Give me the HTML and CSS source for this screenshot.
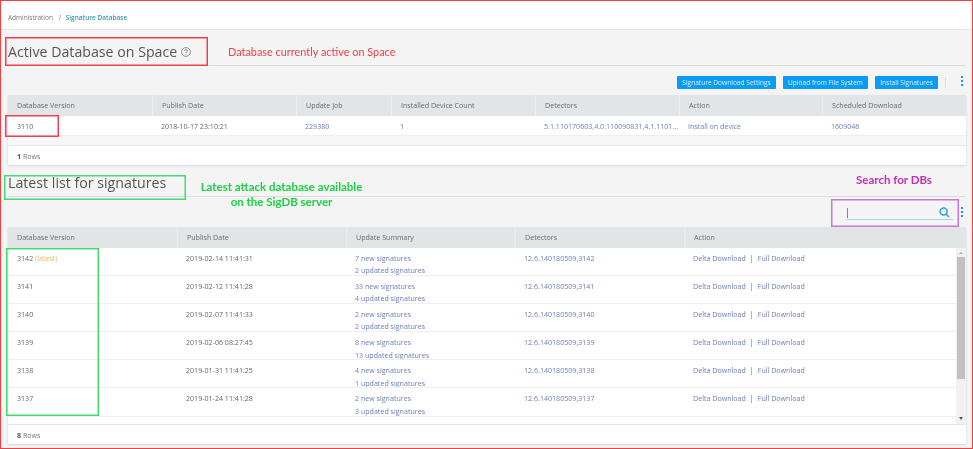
FILE: index.html
```html
<!DOCTYPE html>
<html lang="en">
<head>
  <meta charset="UTF-8">
  <title>Signature Database</title>
  <link rel="stylesheet" href="styles.css">
</head>
<body>
  <div class="frame">
    <div class="breadcrumb">
      <span>Administration</span>
      <span class="crumb-sep">/</span>
      <b>Signature Database</b>
    </div>

    <div class="content">
      <div class="section-title active-title">
        <h1>Active Database on Space</h1>
        <svg class="help-icon" width="10" height="10" viewBox="0 0 10 10" fill="none" stroke="#777" stroke-width="0.8">
          <circle cx="5" cy="5" r="4.4"/>
          <path d="M3.6 4C3.6 3.1 4.2 2.6 5 2.6C5.8 2.6 6.4 3.1 6.4 3.8C6.4 4.8 5 4.8 5 5.9"/>
          <path d="M5 6.8V7.6"/>
        </svg>
      </div>

      <div class="toolbar">
        <button class="btn btn-settings">Signature Download Settings</button>
        <button class="btn btn-upload">Upload from File System</button>
        <button class="btn btn-install">Install Signatures</button>
        <span class="toolbar-sep"></span>
        <span class="kebab"><i></i><i></i><i></i></span>
      </div>

      <div class="grid-panel">
        <div class="row head cols-active">
          <div>Database Version</div>
          <div>Publish Date</div>
          <div>Update Job</div>
          <div>Installed Device Count</div>
          <div>Detectors</div>
          <div>Action</div>
          <div>Scheduled Download</div>
        </div>
        <div class="row body-row single cols-active">
          <div>3110</div>
          <div>2018-10-17 23:10:21</div>
          <div><a>229380</a></div>
          <div>1</div>
          <div><a>5.1.110170603,4.0.110090831,4.1.1101...</a></div>
          <div><a>Install on device</a></div>
          <div><a>1609046</a></div>
        </div>
        <div class="spacer"></div>
        <div class="panel-footer"><b>1</b> Rows</div>
      </div>

      <div class="section-title latest-title">
        <h1>Latest list for signatures</h1>
      </div>

      <div class="toolbar search-bar">
        <div class="search-field">
          <span class="caret"></span>
          <svg width="11" height="11" viewBox="0 0 11 11" fill="none" stroke="#2ea3dc" stroke-width="1.5">
            <circle cx="4.6" cy="4.6" r="3.5"/>
            <path d="M7.2 7.2L10 10"/>
          </svg>
        </div>
        <span class="kebab"><i></i><i></i><i></i></span>
      </div>

      <div class="grid-panel">
        <div class="row head cols-latest">
          <div>Database Version</div>
          <div>Publish Date</div>
          <div>Update Summary</div>
          <div>Detectors</div>
          <div>Action</div>
        </div>
        <div class="scroll-area">
          <div class="rows">
            <div class="row body-row double cols-latest">
              <div>3142 <span class="latest">(latest)</span></div>
              <div>2019-02-14 11:41:31</div>
              <div><a>7 new signatures</a><a>2 updated signatures</a></div>
              <div><a>12.6.140180509,3142</a></div>
              <div><a>Delta Download</a><span class="pipe">|</span><a>Full Download</a></div>
            </div>
            <div class="row body-row double cols-latest">
              <div>3141</div>
              <div>2019-02-12 11:41:28</div>
              <div><a>33 new signatures</a><a>4 updated signatures</a></div>
              <div><a>12.6.140180509,3141</a></div>
              <div><a>Delta Download</a><span class="pipe">|</span><a>Full Download</a></div>
            </div>
            <div class="row body-row double cols-latest">
              <div>3140</div>
              <div>2019-02-07 11:41:33</div>
              <div><a>2 new signatures</a><a>2 updated signatures</a></div>
              <div><a>12.6.140180509,3140</a></div>
              <div><a>Delta Download</a><span class="pipe">|</span><a>Full Download</a></div>
            </div>
            <div class="row body-row double cols-latest">
              <div>3139</div>
              <div>2019-02-06 08:27:45</div>
              <div><a>8 new signatures</a><a>13 updated signatures</a></div>
              <div><a>12.6.140180509,3139</a></div>
              <div><a>Delta Download</a><span class="pipe">|</span><a>Full Download</a></div>
            </div>
            <div class="row body-row double cols-latest">
              <div>3138</div>
              <div>2019-01-31 11:41:25</div>
              <div><a>4 new signatures</a><a>1 updated signatures</a></div>
              <div><a>12.6.140180509,3138</a></div>
              <div><a>Delta Download</a><span class="pipe">|</span><a>Full Download</a></div>
            </div>
            <div class="row body-row double cols-latest">
              <div>3137</div>
              <div>2019-01-24 11:41:28</div>
              <div><a>2 new signatures</a><a>3 updated signatures</a></div>
              <div><a>12.6.140180509,3137</a></div>
              <div><a>Delta Download</a><span class="pipe">|</span><a>Full Download</a></div>
            </div>
          </div>
          <div class="scrollbar">
            <span class="arrow-up"></span>
            <span class="thumb"></span>
            <span class="arrow-down"></span>
          </div>
        </div>
        <div class="panel-footer"><b>8</b> Rows</div>
      </div>
    </div>

    <!-- annotations drawn on top of the screenshot -->
    <div class="mark box-title"></div>
    <div class="mark box-version"></div>
    <div class="mark box-latest"></div>
    <div class="mark box-column"></div>
    <div class="mark box-search"></div>
    <div class="note note-red">Database currently active on Space</div>
    <div class="note note-green">Latest attack database available<br>on the SigDB server</div>
    <div class="note note-purple">Search for DBs</div>
  </div>
</body>
</html>
```

FILE: styles.css
```css
html, body {
  margin: 0;
  padding: 0;
}
body {
  background: #fff;
  font-family: 'Open Sans', 'Liberation Sans', sans-serif;
  font-size: 7.1px;
  color: #666;
}
.frame {
  position: relative;
  box-sizing: border-box;
  width: 973px;
  height: 449px;
  border: 1px solid #f04040;
  overflow: hidden;
  background: #f4f4f4;
  filter: blur(0.3px);
}
.breadcrumb {
  box-sizing: border-box;
  height: 29px;
  padding: 12px 0 0 7px;
  line-height: 9px;
  font-size: 6.5px;
  background: #fff;
  border-bottom: 1px solid #e6e6e6;
  color: #777;
}
.breadcrumb b {
  color: #3f9aa8;
  font-weight: 600;
}
.crumb-sep {
  margin: 0 3px 0 4px;
}
.content {
  padding: 0 6px 0 7px;
}
.section-title {
  display: flex;
  align-items: center;
  box-sizing: border-box;
  border-bottom: 1px solid #dcdcdc;
}
.section-title h1 {
  margin: 0;
  font-size: 14.2px;
  font-weight: 400;
  color: #555;
}
.active-title {
  height: 36px;
  padding-top: 7px;
}
.help-icon {
  margin: 1px 0 0 4px;
}
.latest-title {
  height: 32px;
  padding-top: 3px;
}
.toolbar {
  display: flex;
  justify-content: flex-end;
  align-items: center;
  height: 29px;
  padding-top: 4px;
  box-sizing: border-box;
}
.btn {
  height: 13px;
  padding: 0;
  margin-left: 7px;
  border: 0;
  border-radius: 1px;
  background: #0a9bf5;
  color: #d8f0ff;
  font-family: inherit;
  font-size: 6.6px;
  line-height: 13px;
}
.btn-settings { width: 99px; }
.btn-upload { width: 85px; }
.btn-install { width: 63px; }
.toolbar-sep {
  width: 1px;
  height: 11px;
  margin-left: 7px;
  background: #ddd;
}
.kebab {
  display: flex;
  flex-direction: column;
  gap: 2px;
  width: 2px;
  margin: 0 3px 3px 15px;
}
.kebab i {
  display: block;
  width: 2px;
  height: 2px;
  background: #0a9bf5;
}
.search-bar {
  height: 30px;
  padding-top: 1px;
}
.search-field {
  display: flex;
  justify-content: space-between;
  align-items: center;
  box-sizing: border-box;
  width: 106px;
  height: 14px;
  margin-top: 1px;
  padding: 0 3px 0 0;
  border-bottom: 1px solid #a5d8ea;
}
.caret {
  width: 1px;
  height: 10px;
  background: #888;
}
.search-bar .kebab {
  margin: 0 3px 2px 8px;
}
.grid-panel {
  background: #fff;
  box-shadow: 0 1px 2px rgba(0,0,0,0.12);
}
.row {
  display: grid;
}
.row > div {
  padding-left: 9px;
  white-space: nowrap;
  overflow: hidden;
}
.cols-active {
  grid-template-columns: 144px 144px 95px 144px 144px 143px 1fr;
}
.cols-latest {
  grid-template-columns: 169px 169px 169px 169px 1fr;
}
.head {
  height: 21px;
  background: #e2e5e6;
  line-height: 21px;
  color: #6b6b6b;
}
.head > div {
  border-left: 1px solid #eceeee;
}
.head > div:first-child {
  border-left: 0;
}
.body-row a {
  color: #6c7db5;
}
.single {
  height: 20px;
  line-height: 20px;
  border-bottom: 1px solid #eee;
  box-sizing: border-box;
}
.spacer {
  height: 9px;
  background: #f7f7f7;
}
.panel-footer {
  box-sizing: border-box;
  height: 20px;
  line-height: 20px;
  padding-left: 9px;
  border-top: 1px solid #e6e6e6;
  color: #777;
}
.panel-footer b {
  font-weight: 700;
  color: #555;
}
.scroll-area {
  display: flex;
  height: 176px;
}
.rows {
  flex: 1;
  min-width: 0;
}
.double {
  box-sizing: border-box;
  height: 28.1px;
  padding-top: 4px;
  line-height: 12.3px;
  border-bottom: 1px solid #eee;
}
.double a {
  display: block;
}
.double > div:last-child a {
  display: inline;
}
.latest {
  color: #eeb45c;
}
.pipe {
  margin: 0 4px;
}
.scrollbar {
  display: flex;
  flex-direction: column;
  align-items: center;
  width: 10px;
  background: #f1f1f1;
}
.thumb {
  width: 8px;
  height: 122px;
  margin-top: 3px;
  background: #c1c1c1;
}
.arrow-up,
.arrow-down {
  width: 0;
  height: 0;
  border-left: 2px solid transparent;
  border-right: 2px solid transparent;
}
.arrow-up {
  margin-top: 4px;
  border-bottom: 2px solid #aaa;
}
.arrow-down {
  margin-top: auto;
  margin-bottom: 4px;
  border-top: 3px solid #555;
}
.mark {
  position: absolute;
  box-sizing: border-box;
}
.box-title {
  left: 4px;
  top: 36px;
  width: 203px;
  height: 29px;
  box-shadow: inset 0 0 0 1.5px #f0404a;
}
.box-version {
  left: 4px;
  top: 114px;
  width: 54px;
  height: 22px;
  box-shadow: inset 0 0 0 1.5px #f0404a;
}
.box-latest {
  left: 3px;
  top: 174px;
  width: 182px;
  height: 25px;
  box-shadow: inset 0 0 0 1.5px #40dc70;
}
.box-column {
  left: 5px;
  top: 247px;
  width: 93px;
  height: 168px;
  box-shadow: inset 0 0 0 1.5px #40dc70;
}
.box-search {
  left: 830px;
  top: 198px;
  width: 128px;
  height: 28px;
  box-shadow: inset 0 0 0 1.5px #c878d8;
}
.note {
  position: absolute;
  font-family: Lato, 'Liberation Sans', sans-serif;
  white-space: nowrap;
}
.note-red {
  left: 227px;
  top: 43px;
  font-size: 10.9px;
  line-height: 15px;
  color: #f0404a;
}
.note-green {
  left: 199px;
  top: 179px;
  width: 163px;
  font-size: 11.5px;
  font-weight: 700;
  line-height: 14.5px;
  text-align: center;
  color: #1ed045;
}
.note-purple {
  left: 855px;
  top: 172px;
  font-size: 11.5px;
  font-weight: 700;
  line-height: 14px;
  color: #c030b8;
}
```
